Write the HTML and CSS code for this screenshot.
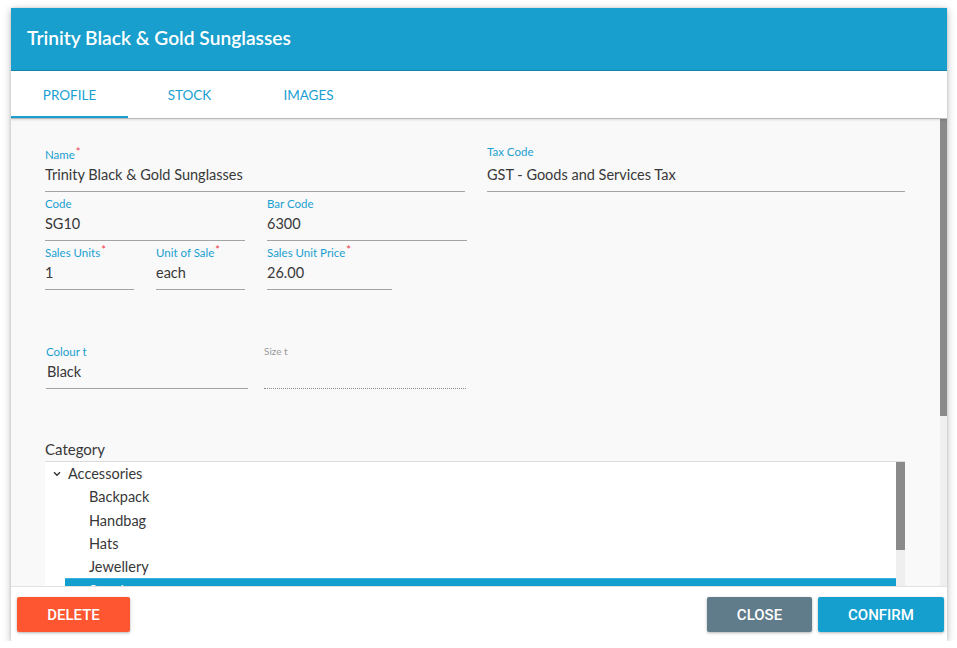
FILE: index.html
```html
<!DOCTYPE html>
<html>
<head>
<meta charset="utf-8">
<link rel="stylesheet" href="styles.css">
</head>
<body>
<div class="dialog">
  <div class="header"><h1 class="title">Trinity Black &amp; Gold Sunglasses</h1></div>
  <div class="tabs">
    <div class="tab active">PROFILE</div>
    <div class="tab">STOCK</div>
    <div class="tab">IMAGES</div>
  </div>
  <div class="body-area">
    <div class="content">
      <div class="top-grid">
        <div class="left-col">
          <div class="field w-name"><div class="lbl">Name<span class="req">*</span></div><div class="val">Trinity Black &amp; Gold Sunglasses</div></div>
          <div class="row">
            <div class="field w-200"><div class="lbl">Code</div><div class="val">SG10</div></div>
            <div class="field w-200"><div class="lbl">Bar Code</div><div class="val">6300</div></div>
          </div>
          <div class="row">
            <div class="field w-89"><div class="lbl">Sales Units<span class="req">*</span></div><div class="val">1</div></div>
            <div class="field w-89"><div class="lbl">Unit of Sale<span class="req">*</span></div><div class="val">each</div></div>
            <div class="field w-125"><div class="lbl">Sales Unit Price<span class="req">*</span></div><div class="val">26.00</div></div>
          </div>
        </div>
        <div class="right-col">
          <div class="field"><div class="lbl">Tax Code</div><div class="val">GST - Goods and Services Tax</div></div>
        </div>
      </div>
      <div class="attr-row">
        <div class="field w-202"><div class="lbl">Colour t</div><div class="val">Black</div></div>
        <div class="field w-202 disabled"><div class="lbl">Size t</div><div class="val"></div></div>
      </div>
      <div class="cat-label">Category</div>
      <div class="tree">
        <div class="tree-list">
          <div class="node parent"><svg class="chev" width="8" height="6" viewBox="0 0 8 6"><path d="M1 1.2 L4 4.2 L7 1.2" fill="none" stroke="#333" stroke-width="1.4"/></svg>Accessories</div>
          <div class="node child">Backpack</div>
          <div class="node child">Handbag</div>
          <div class="node child">Hats</div>
          <div class="node child">Jewellery</div>
          <div class="node child selected">Sunglasses</div>
        </div>
        <div class="vbar tree-bar"><div class="thumb"></div></div>
      </div>
    </div>
    <div class="vbar main-bar"><div class="thumb"></div></div>
  </div>
  <div class="footer">
    <button class="btn btn-delete">DELETE</button>
    <div class="spacer"></div>
    <button class="btn btn-close">CLOSE</button>
    <button class="btn btn-confirm">CONFIRM</button>
  </div>
</div>
</body>
</html>
```
FILE: styles.css
```css
html, body {
  margin: 0;
  padding: 0;
  background: #ffffff;
}
body {
  font-family: Lato, "Open Sans", sans-serif;
  color: #333;
}
.dialog {
  margin: 8px 0 0 11px;
  width: 936px;
  height: 633px;
  display: flex;
  flex-direction: column;
  background: #fff;
  box-shadow: 0 2px 8px rgba(0,0,0,0.28), 0 0 2px rgba(0,0,0,0.12);
  overflow: hidden;
}
.header {
  height: 62px;
  flex: none;
  background: #199fcd;
  border-bottom: 1px solid #1685ad;
  display: flex;
  align-items: center;
  padding-left: 16px;
}
.title {
  margin: 0;
  font-size: 19.2px;
  font-weight: 600;
  color: #fff;
  padding-bottom: 3px;
}
.tabs {
  flex: none;
  height: 47px;
  display: flex;
  background: #fff;
  border-bottom: 1px solid #b8b8b8;
  box-shadow: 0 1px 2px rgba(0,0,0,0.12);
  position: relative;
  z-index: 1;
}
.tab {
  width: 119px;
  display: flex;
  align-items: center;
  justify-content: center;
  font-size: 13.5px;
  color: #1a9fd1;
  box-sizing: border-box;
  padding-top: 1px;
}
.tab:first-child { width: 117px; margin-right: 2px; }
.tab.active {
  border-bottom: 2px solid #1a9fd1;
  padding-top: 3px;
}
.body-area {
  flex: 1;
  min-height: 0;
  display: flex;
  background: #f9f9f9;
}
.content {
  flex: 1;
  overflow: hidden;
  padding: 29px 0 0 34px;
}
.vbar {
  flex: none;
  background: #efefef;
}
.vbar .thumb { background: #8a8a8a; }
.main-bar { width: 7px; }
.main-bar .thumb { height: 297px; }
.tree-bar { width: 9px; }
.tree-bar .thumb { height: 88px; }

.top-grid {
  display: grid;
  grid-template-columns: 422px 418px;
  column-gap: 20px;
}
.left-col {
  display: flex;
  flex-direction: column;
  gap: 5px;
}
.row {
  display: flex;
  gap: 22px;
}
.field { display: flex; flex-direction: column; }
.lbl {
  font-size: 11.5px;
  line-height: 13px;
  height: 13px;
  color: #1a9fd1;
  white-space: nowrap;
}
.req {
  color: #f0384d;
  font-size: 11px;
  position: relative;
  top: -3px;
  margin-left: 1px;
}
.val {
  height: 27px;
  padding-bottom: 3px;
  display: flex;
  align-items: center;
  font-size: 14.5px;
  color: #383838;
  border-bottom: 1px solid #a4a4a4;
  white-space: nowrap;
}
.right-col .lbl { margin-top: -3px; margin-bottom: 3px; }
.w-name { width: 420px; }
.w-200 { width: 200px; }
.w-89 { width: 89px; }
.w-125 { width: 125px; }
.w-202 { width: 202px; }
.attr-row {
  display: flex;
  gap: 16px;
  margin-top: 55px;
  margin-left: 1px;
}
.attr-row .val { padding-left: 1px; }
.disabled .lbl {
  color: #9a9a9a;
  font-size: 10px;
}
.disabled .val {
  border-bottom: 1px dotted #8a8a8a;
}
.cat-label {
  margin-top: 51px;
  font-size: 15px;
  line-height: 18px;
  color: #383838;
}
.tree {
  margin-top: 3px;
  width: 860px;
  height: 240px;
  box-sizing: border-box;
  border-top: 1px solid #dcdcdc;
  background: #fff;
  display: flex;
}
.tree-list {
  flex: 1;
  overflow: hidden;
}
.node {
  height: 23.3px;
  display: flex;
  align-items: center;
  font-size: 14.5px;
  color: #383838;
  white-space: nowrap;
}
.parent { padding-left: 23px; }
.parent .chev { margin-left: -15px; margin-right: 7px; }
.child { margin-left: 20px; padding-left: 24px; }
.selected {
  background: #139fcd;
  color: #fff;
  border-top: 1px solid #3cb3dc;
  box-sizing: border-box;
}

.footer {
  flex: none;
  height: 55px;
  border-top: 1px solid #e2e2e2;
  background: #fff;
  display: flex;
  align-items: flex-start;
  padding: 10px 3px 0 6px;
  gap: 6px;
  box-sizing: border-box;
}
.spacer { flex: 1; }
.btn {
  height: 35px;
  border: none;
  border-radius: 2px;
  color: #fff;
  font-family: Roboto, "Liberation Sans", sans-serif;
  font-weight: 500;
  font-size: 15px;
  box-shadow: 0 1px 3px rgba(0,0,0,0.3);
  padding: 0;
  cursor: pointer;
}
.btn-delete { width: 113px; background: #fe5630; }
.btn-close { width: 105px; background: #607b89; }
.btn-confirm { width: 126px; background: #159fcf; }
```
